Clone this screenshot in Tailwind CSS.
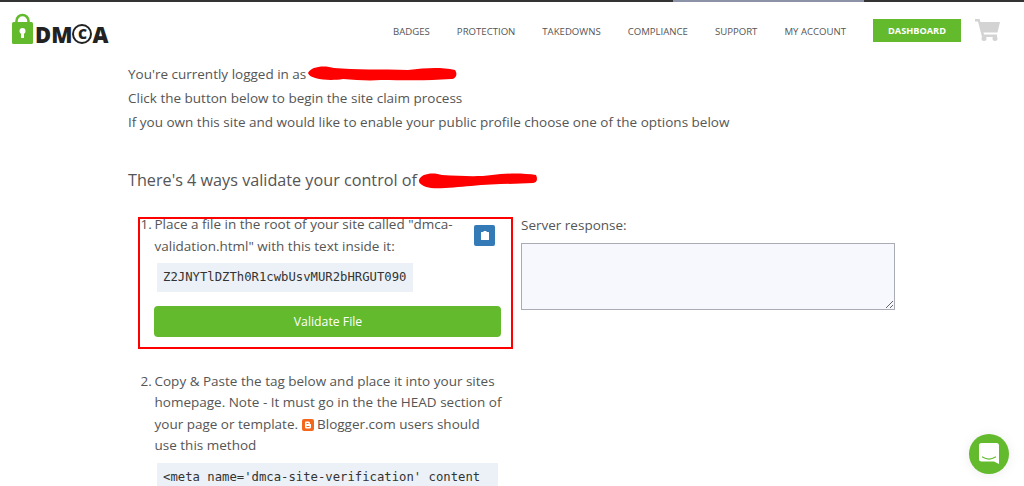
<!DOCTYPE html>
<html lang="en">
<head>
    <meta charset="UTF-8">
    <meta name="viewport" content="width=device-width, initial-scale=1.0">
    <title>Claim site</title>
    <script src="https://cdn.jsdelivr.net/npm/@tailwindcss/browser@4"></script>
</head>
<body class="bg-white h-[486px] overflow-hidden font-['Open_Sans',sans-serif] text-[#555] relative">
    <!-- top strip -->
    <div class="h-[2px] bg-[#333] pl-[673px]"><div class="w-[191px] h-[2px] bg-[#8c93a8]"></div></div>

    <header class="h-[60px] flex items-start">
        <a class="ml-[12px] mt-[11px] flex items-start">
            <svg width="21" height="31" viewBox="0 0 21 31">
                <path d="M4.500 11V8a6 6 0 0 1 12 0v3" fill="none" stroke="#63ba2d" stroke-width="2.500"/>
                <rect x="0" y="9" width="21" height="22" rx="1.500" fill="#63ba2d"/>
                <circle cx="10.500" cy="18" r="3" fill="#fff"/>
                <rect x="9" y="18" width="3" height="7" fill="#fff"/>
            </svg>
            <span class="ml-[2px] mt-[9px] flex items-center h-[24px] text-[22px] leading-[24px] font-extrabold text-[#222]">DM<span class="inline-flex items-center justify-center w-[20px] h-[20px] rounded-full border-2 border-[#222] text-[14px] leading-none">C</span>A</span>
        </a>
        <nav class="ml-auto flex items-center h-[23px] mt-[17px] gap-[27px] text-[9.6px] font-medium text-[#555] uppercase">
            <a class="pt-[3px]">Badges</a>
            <a class="pt-[3px]">Protection</a>
            <a class="pt-[3px]">Takedowns</a>
            <a class="pt-[3px]">Compliance</a>
            <a class="pt-[3px]">Support</a>
            <a class="pt-[3px]">My Account</a>
            <a class="bg-[#63ba2d] text-white text-[9.2px] font-bold w-[88px] h-[23px] flex items-center justify-center">Dashboard</a>
        </nav>
        <svg class="mt-[16px] ml-[14px] mr-[24px]" width="25" height="23" viewBox="0 0 25 23" fill="#d3d3d3">
            <path d="M0 1h4.500l1 3H25l-2.500 10.500H8.500l.5 2h13v2.500H7L3 3.500H0z"/>
            <circle cx="9" cy="20.500" r="2.500"/>
            <circle cx="20" cy="20.500" r="2.500"/>
        </svg>
    </header>

    <main class="pl-[128px] text-[13.5px]">
        <p class="leading-[24px] flex items-center">You're currently logged in as
            <svg class="ml-[1px]" width="150" height="16" viewBox="0 0 150 16"><path d="M1 7C4 0 18-1 27 2c20 2 48 1 74 2 18-2 32-3 47 0 3 4 1 9-4 9-25 2-50 1-70 1-12 1-25 0-38-1C24 15 3 14 1 7z" fill="#f00"/></svg>
        </p>
        <p class="leading-[24px]">Click the button below to begin the site claim process</p>
        <p class="leading-[24px]">If you own this site and would like to enable your public profile choose one of the options below</p>

        <h2 class="mt-[33px] text-[16.2px] leading-[26px] flex items-center">There's 4 ways validate your control of
            <svg class="ml-[1px]" width="120" height="17" viewBox="0 0 120 17"><path d="M1 8C3 1 16 0 24 3c20 1 36 2 50 0 14-2 32-2 44 0 2 4 1 8-3 8-20 1-40 1-62 3-14 1-30 3-40 2C6 15 0 12 1 8z" fill="#f00"/></svg>
        </h2>

        <div class="mt-[24px] ml-[10px] grid grid-cols-[375px_374px] gap-x-[8px] leading-[21.6px]">
            <div>
                <div class="border-2 border-[#f00] h-[132px] pl-[14px] pr-[10px] relative">
                    <div class="relative w-[302px] mt-[-5px] ml-[0.5px]"><span class="absolute left-[-14px]">1.</span>Place a file in the root of your site called "dmca-validation.html" with this text inside it:</div>
                    <button class="absolute left-[334px] top-[6px] w-[21px] h-[21px] bg-[#337ab7] rounded-[2px] flex items-center justify-center">
                        <svg width="8" height="9" viewBox="0 0 8 9" fill="#fff"><path d="M2.500 0h3v1h2a.5.5 0 0 1 .5.5v7a.5.5 0 0 1-.5.5h-7a.5.5 0 0 1-.5-.5v-7A.5.5 0 0 1 .5 1h2z"/></svg>
                    </button>
                    <code class="block ml-[3px] mt-[5.5px] w-[256px] h-[29px] bg-[#ebf1f6] px-[6px] leading-[29px] text-[12.25px] text-[#333] font-['DejaVu_Sans_Mono',monospace]">Z2JNYTlDZTh0R1cwbUsvMUR2bHRGUT090</code>
                    <button class="block mt-[14px] w-[347px] h-[31px] pt-[1px] pl-[1px] bg-[#63ba2d] rounded-[4px] text-white text-[12.25px] text-center">Validate File</button>
                </div>
                <div class="pl-[16px] pt-[22px] w-[375px]">
                    <div class="relative w-[350px] ml-[0.5px] leading-[21.33px]"><span class="absolute left-[-14px]">2.</span>Copy &amp; Paste the tag below and place it into your sites homepage. Note - It must go in the the HEAD section of your page or template.
                        <svg class="inline-block align-[-2px]" width="12" height="12" viewBox="0 0 12 12"><rect width="12" height="12" rx="2" fill="#f4661b"/><path d="M3 3.500A1 1 0 0 1 4 2.500h2.500A1.500 1.500 0 0 1 8 4v1h.5a.5.5 0 0 1 .5.5V8a1.500 1.500 0 0 1-1.500 1.500H4.500A1.500 1.500 0 0 1 3 8z" fill="#fff"/><rect x="4.500" y="4" width="2" height="1" fill="#f4661b"/><rect x="4.500" y="7" width="3" height="1" fill="#f4661b"/></svg>
                        Blogger.com users should use this method</div>
                    <code class="block ml-[3px] mt-[7px] w-[341px] h-[29px] bg-[#ebf1f6] px-[6px] leading-[29px] text-[12.25px] text-[#333] font-['DejaVu_Sans_Mono',monospace] whitespace-nowrap overflow-hidden">&lt;meta name='dmca-site-verification' content</code>
                </div>
            </div>
            <div>
                <label class="block mt-[-2px]">Server response:</label>
                <textarea class="block mt-[6px] w-[374px] h-[67px] bg-[#f7f8fd] border border-[#a9acb4]"></textarea>
            </div>
        </div>
    </main>

    <!-- chat launcher -->
    <button class="absolute left-[969px] top-[434px] w-[40px] h-[40px] rounded-full bg-[#63ba2d] flex items-center justify-center shadow-[0_1px_12px_rgba(0,0,0,0.08)]">
        <svg width="20" height="22" viewBox="0 0 20 22"><path d="M2.500 0h15A2.500 2.500 0 0 1 20 2.500V21l-5-2.500H2.500A2.500 2.500 0 0 1 0 16V2.500A2.500 2.500 0 0 1 2.500 0z" fill="#fff"/><path d="M3.500 14c4 2.500 9 2.500 13 0" fill="none" stroke="#63ba2d" stroke-width="1.200" stroke-linecap="round"/></svg>
    </button>
</body>
</html>
